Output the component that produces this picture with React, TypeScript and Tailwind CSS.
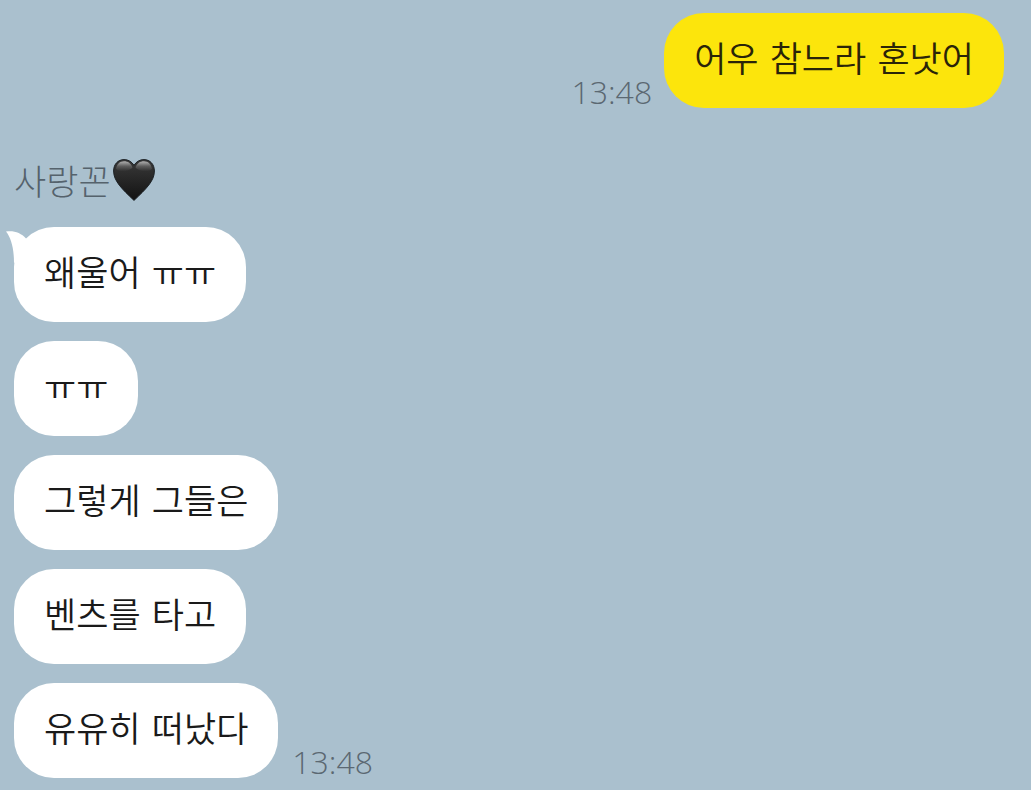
import clsx from 'clsx';

type Message = {
  id: number;
  text: string;
  time?: string;
};

const messages: Message[] = [
  { id: 1, text: '왜울어 ㅠㅠ' },
  { id: 2, text: 'ㅠㅠ' },
  { id: 3, text: '그렇게 그들은' },
  { id: 4, text: '벤츠를 타고' },
  { id: 5, text: '유유히 떠났다', time: '13:48' },
];

function Time({ value }: { value: string }) {
  return (
    <time className="font-['Open_Sans','Noto_Sans',sans-serif] text-[32px] leading-8 font-light text-[#5b6872]">
      {value}
    </time>
  );
}

function Bubble({ text, mine }: { text: string; mine?: boolean }) {
  return (
    <p
      className={clsx(
        "rounded-[40px] px-[30px] py-6 font-['DejaVu_Sans','Noto_Sans_CJK_KR',sans-serif] text-[35px] leading-[47px] font-[350]",
        mine ? 'bg-[#fce50c] text-[#2a2408]' : 'bg-white text-[#1a1a1a]',
      )}
    >
      {text}
    </p>
  );
}

function BlackHeart() {
  return (
    <svg viewBox="0 0 42 42" className="h-[42px] w-[42px]" aria-label="검은 하트" role="img">
      <defs>
        <linearGradient id="heart-body" x1="0" y1="0" x2="0" y2="1">
          <stop offset="0" stopColor="#3a3a3a" />
          <stop offset="0.4" stopColor="#2a2a2a" />
          <stop offset="1" stopColor="#121212" />
        </linearGradient>
        <linearGradient id="heart-gloss" x1="0" y1="0" x2="0" y2="1">
          <stop offset="0" stopColor="#fff" stopOpacity="0.6" />
          <stop offset="0.5" stopColor="#fff" stopOpacity="0.2" />
          <stop offset="1" stopColor="#fff" stopOpacity="0" />
        </linearGradient>
      </defs>
      <path
        d="M21 6.3C18.7 2.5 15 .6 11 .6 5 .6.6 5.3.6 12 .6 22 9 30 21 41.4 33 30 41.4 22 41.4 12 41.4 5.3 37 .6 31 .6c-4 0-7.7 1.9-10 5.7Z"
        fill="url(#heart-body)"
        stroke="#1c2125"
      />
      <path
        d="M3 10C3.800 5 7 2.300 11 2.300c4 0 7 2 8.500 6.200C17 12 7 14 3 10ZM39 10C38.200 5 35 2.300 31 2.300c-4 0-7 2-8.500 6.200C25 12 35 14 39 10Z"
        fill="url(#heart-gloss)"
      />
    </svg>
  );
}

export default function App() {
  return (
    <main className="min-h-screen bg-[#aac0ce] pt-[13px] pr-[27px] pb-3 pl-[14px] font-['Noto_Sans_CJK_KR',sans-serif]">
      {/* 내 메시지 */}
      <div className="flex items-end justify-end gap-3">
        <Time value="13:48" />
        <Bubble text="어우 참느라 혼낫어" mine />
      </div>

      {/* 상대방 메시지 */}
      <section className="mt-12">
        <h2 className="flex items-center gap-0.5 text-[35px] leading-[47px] font-light text-[#55626c]">
          사랑꼰
          <BlackHeart />
        </h2>

        <ul className="mt-6 flex flex-col gap-[19px]">
          {messages.map(({ id, text, time }, i) => (
            <li key={id} className="relative flex items-end gap-3.5">
              {/* 말풍선 꼬리 */}
              {i === 0 && (
                <svg viewBox="0 0 32 32" className="absolute top-1 -left-2 h-8 w-8 text-white">
                  <path d="M0 .6C8-.6 15 2 20 7.500L24 20 8 32C8 17 5 7 0 .6Z" fill="currentColor" />
                </svg>
              )}
              <Bubble text={text} />
              {time && <Time value={time} />}
            </li>
          ))}
        </ul>
      </section>
    </main>
  );
}
